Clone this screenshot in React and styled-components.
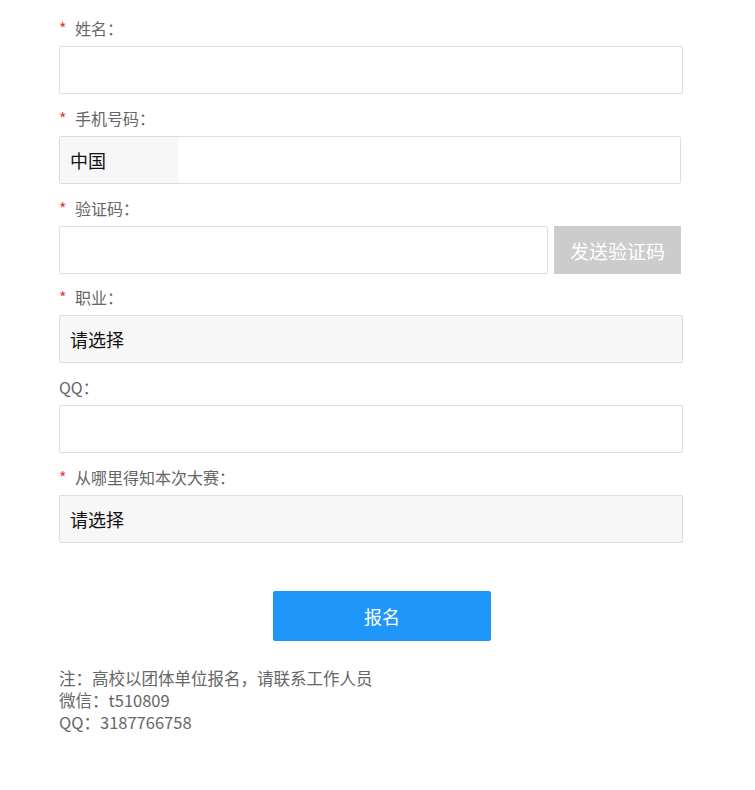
import React from "react";
import styled, { createGlobalStyle } from "styled-components";

const Global = createGlobalStyle`
  html, body { margin: 0; padding: 0; background: #fff; }
  body { font-family: "Noto Sans CJK SC", "Noto Sans", sans-serif; }
  * { box-sizing: border-box; }
`;

const Form = styled.form`
  width: 624px;
  margin: 0 0 0 59px;
  padding-top: 17px;
  display: flex;
  flex-direction: column;
`;

const Group = styled.div`
  display: flex;
  flex-direction: column;
  gap: 7px;
  margin-bottom: ${(p) => (p.$tight ? "12px" : "13px")};
`;

const Label = styled.label`
  font-size: 16px;
  line-height: 22px;
  color: #666;
  display: flex;
  align-items: center;
`;

const Star = styled.span`
  color: #e4393c;
  font-size: 16px;
  width: 16px;
`;

const Input = styled.input`
  height: 48px;
  width: ${(p) => p.$w || "100%"};
  border: 1px solid #ddd;
  border-radius: 2px;
  background: #fff;
  outline: none;
  font-size: 18px;
  padding: 0 10px;
  font-family: inherit;
`;

const PhoneBox = styled.div`
  height: 48px;
  width: 622px;
  border: 1px solid #ddd;
  border-radius: 2px;
  display: flex;
`;

const Country = styled.div`
  width: 118px;
  background: #f7f7f7;
  font-size: 18px;
  color: #111;
  display: flex;
  align-items: center;
  padding-left: 10px;
`;

const PhoneInput = styled.input`
  flex: 1;
  border: none;
  outline: none;
  background: #fff;
  font-size: 18px;
`;

const CodeRow = styled.div`
  display: flex;
  gap: 6px;
`;

const SendBtn = styled.button`
  width: 127px;
  height: 48px;
  border: none;
  background: #cccccc;
  color: #fff;
  font-size: 19px;
  font-family: inherit;
  padding: 0;
`;

const Select = styled.div`
  height: 48px;
  border: 1px solid #ddd;
  border-radius: 2px;
  background: #f7f7f7;
  font-size: 18px;
  color: #111;
  display: flex;
  align-items: center;
  padding-left: 10px;
`;

const Submit = styled.button`
  align-self: flex-start;
  margin: 35px 0 0 214px;
  width: 218px;
  height: 50px;
  border: none;
  border-radius: 2px;
  background: #1e96fa;
  color: #fff;
  font-size: 18px;
  font-family: inherit;
`;

const Notes = styled.div`
  margin-top: 26px;
  display: flex;
  flex-direction: column;
`;

const NoteLine = styled.p`
  margin: 0;
  height: 22px;
  font-size: 16.5px;
  line-height: 22px;
  color: #666;
  white-space: nowrap;
`;

const fields = [
  { label: "姓名：", req: true, type: "text" },
  { label: "手机号码：", req: true, type: "phone" },
  { label: "验证码：", req: true, type: "code" },
  { label: "职业：", req: true, type: "select" },
  { label: "QQ：", req: false, type: "text" },
  { label: "从哪里得知本次大赛：", req: true, type: "select" },
];

function Control({ type }) {
  if (type === "phone")
    return (
      <PhoneBox>
        <Country>中国</Country>
        <PhoneInput />
      </PhoneBox>
    );
  if (type === "code")
    return (
      <CodeRow>
        <Input $w="489px" />
        <SendBtn type="button">发送验证码</SendBtn>
      </CodeRow>
    );
  if (type === "select") return <Select>请选择</Select>;
  return <Input />;
}

export default function App() {
  return (
    <>
      <Global />
      <Form onSubmit={(e) => e.preventDefault()}>
        {fields.map((f, i) => (
          <Group key={i} $tight={f.type === "code"}>
            <Label>
              {f.req && <Star>*</Star>}
              {f.label}
            </Label>
            <Control type={f.type} />
          </Group>
        ))}
        <Submit type="submit">报名</Submit>
        <Notes>
          <NoteLine>注：高校以团体单位报名，请联系工作人员</NoteLine>
          <NoteLine>微信：t510809</NoteLine>
          <NoteLine>QQ：3187766758</NoteLine>
        </Notes>
      </Form>
    </>
  );
}
